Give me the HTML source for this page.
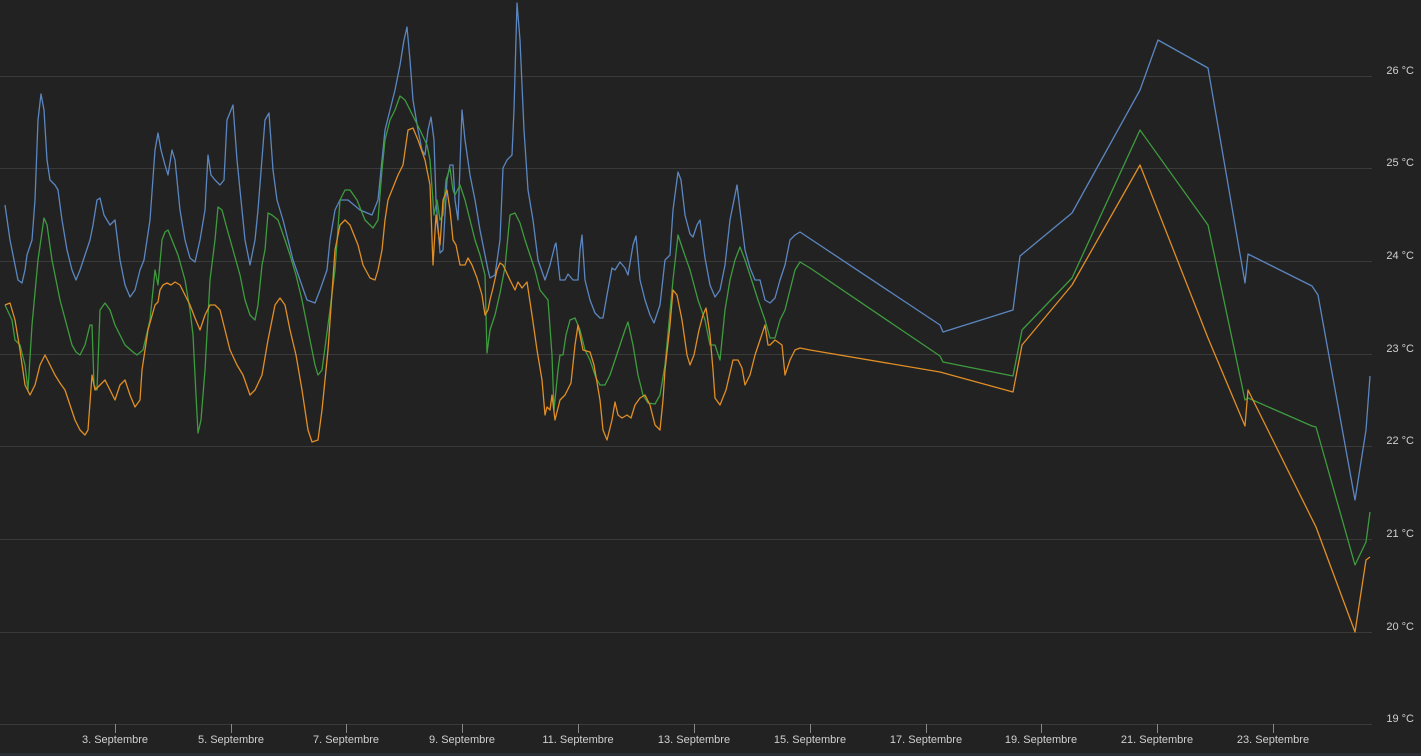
<!DOCTYPE html>
<html><head><meta charset="utf-8"><style>
html,body{margin:0;padding:0;background:#222;width:1421px;height:756px;overflow:hidden}
svg{display:block}
text{font-family:"Liberation Sans",sans-serif;font-size:11px;fill:#d0d0d0}
</style></head><body>
<svg width="1421" height="756" viewBox="0 0 1421 756">
<rect width="1421" height="756" fill="#222"/>
<g stroke="#3a3a3a" stroke-width="1">
<line x1="0" y1="76.5" x2="1372" y2="76.5"/>
<line x1="0" y1="168.5" x2="1372" y2="168.5"/>
<line x1="0" y1="261.5" x2="1372" y2="261.5"/>
<line x1="0" y1="354.5" x2="1372" y2="354.5"/>
<line x1="0" y1="446.5" x2="1372" y2="446.5"/>
<line x1="0" y1="539.5" x2="1372" y2="539.5"/>
<line x1="0" y1="632.5" x2="1372" y2="632.5"/>
<line x1="0" y1="724.5" x2="1372" y2="724.5"/>
</g>
<g stroke="#888" stroke-width="1">
<line x1="115.5" y1="724" x2="115.5" y2="733"/><line x1="231.5" y1="724" x2="231.5" y2="733"/>
<line x1="346.5" y1="724" x2="346.5" y2="733"/><line x1="462.5" y1="724" x2="462.5" y2="733"/>
<line x1="578.5" y1="724" x2="578.5" y2="733"/><line x1="694.5" y1="724" x2="694.5" y2="733"/>
<line x1="810.5" y1="724" x2="810.5" y2="733"/><line x1="926.5" y1="724" x2="926.5" y2="733"/>
<line x1="1041.5" y1="724" x2="1041.5" y2="733"/><line x1="1157.5" y1="724" x2="1157.5" y2="733"/>
<line x1="1273.5" y1="724" x2="1273.5" y2="733"/>
</g>
<g text-anchor="middle">
<text x="115" y="743">3. Septembre</text><text x="231" y="743">5. Septembre</text>
<text x="346" y="743">7. Septembre</text><text x="462" y="743">9. Septembre</text>
<text x="578" y="743">11. Septembre</text><text x="694" y="743">13. Septembre</text>
<text x="810" y="743">15. Septembre</text><text x="926" y="743">17. Septembre</text>
<text x="1041" y="743">19. Septembre</text><text x="1157" y="743">21. Septembre</text>
<text x="1273" y="743">23. Septembre</text>
</g>
<g text-anchor="end">
<text x="1414" y="74">26 °C</text><text x="1414" y="166">25 °C</text>
<text x="1414" y="259">24 °C</text><text x="1414" y="352">23 °C</text>
<text x="1414" y="444">22 °C</text><text x="1414" y="537">21 °C</text>
<text x="1414" y="630">20 °C</text><text x="1414" y="722">19 °C</text>
</g>
<rect x="0" y="753" width="1421" height="3" fill="#2a2d33"/>
<g fill="none" stroke-width="1.3" stroke-linejoin="round">
<polyline stroke="#5b86c0" points="5,205 10,240 18,280 22,283 25,270 27,255 32,240 35,200 38,120 41,94 44,110 47,160 50,180 55,185 58,190 62,220 67,250 72,270 76,280 80,270 85,255 90,240 93,225 97,200 100,198 104,215 110,225 115,220 120,260 125,285 130,297 135,290 140,270 144,260 150,220 155,150 158,133 161,150 165,165 168,175 172,150 175,160 180,210 185,240 190,258 195,262 200,240 205,210 208,155 211,175 215,180 220,185 224,180 227,120 233,105 237,160 242,210 245,240 250,265 255,240 258,210 265,120 269,113 273,170 277,200 283,220 288,240 293,260 300,280 307,300 315,303 320,290 327,270 330,240 335,210 340,200 348,200 360,210 372,215 378,200 385,130 390,110 395,90 400,65 404,40 407,27 410,60 413,100 418,130 422,150 425,155 428,130 431,117 434,140 436,200 440,253 443,250 447,180 450,165 453,165 455,200 458,220 462,110 465,140 470,175 475,200 480,230 484,250 488,270 490,278 495,275 500,240 503,168 507,160 512,155 514,110 517,3 520,40 524,130 528,190 533,220 538,260 545,280 550,265 555,245 556,243 560,280 565,280 568,274 573,280 578,280 580,250 582,235 585,280 590,300 595,313 600,318 603,318 607,295 612,268 615,270 620,262 625,268 628,275 633,245 636,236 640,280 645,300 650,315 654,323 660,305 665,260 670,255 673,210 678,172 681,180 685,215 690,234 693,237 697,225 700,220 705,258 710,285 715,297 720,290 725,265 730,220 737,185 740,210 745,250 750,268 755,280 760,280 765,300 770,303 775,298 780,280 785,265 790,240 795,235 800,232 940,325 943,332 1013,310 1020,256 1072,213 1140,90 1158,40 1208,68 1245,283 1248,254 1312,286 1318,295 1355,500 1366,430 1370,376"/>
<polyline stroke="#3e9b3e" points="5,305 12,320 15,340 20,345 25,365 28,390 32,325 38,260 44,218 47,225 52,260 60,300 68,330 72,345 76,352 80,355 85,345 90,325 92,325 94,385 97,390 100,310 105,303 110,310 115,325 125,345 133,352 137,355 143,350 150,320 155,270 158,285 162,240 165,232 168,230 172,240 178,255 185,280 190,310 193,335 196,395 198,433 201,420 205,370 210,280 215,240 218,207 222,210 226,225 233,250 240,275 245,300 250,315 255,320 258,305 262,265 265,250 268,213 272,215 278,220 285,240 290,255 296,275 302,300 308,330 315,365 318,375 322,370 330,310 335,270 340,200 345,190 350,190 357,200 365,220 373,228 378,220 382,170 385,140 390,120 395,110 400,96 405,100 410,110 415,120 420,130 427,145 430,160 434,215 437,200 440,220 443,215 446,180 450,168 453,190 455,195 460,185 465,200 470,220 475,240 480,255 485,275 487,353 490,330 495,315 500,293 505,267 510,215 515,213 520,223 525,240 535,270 540,290 548,300 552,355 554,410 556,390 558,370 560,355 563,355 566,335 570,320 575,318 580,330 585,350 590,360 596,378 600,385 605,385 610,375 615,360 620,345 625,330 628,322 633,345 638,375 643,395 648,403 655,404 660,395 665,365 673,280 678,235 683,250 690,270 698,300 705,320 710,345 715,345 720,360 725,310 730,280 735,260 740,247 745,260 750,275 758,300 765,320 770,338 775,338 780,320 785,310 790,290 795,270 800,262 810,268 940,356 943,362 1013,376 1022,330 1072,278 1140,130 1208,225 1245,400 1248,398 1312,426 1316,427 1355,565 1366,542 1370,512"/>
<polyline stroke="#e08e25" points="5,305 10,303 15,320 20,350 25,385 30,395 35,385 40,365 45,355 50,365 55,375 60,383 65,390 70,405 75,420 80,430 85,435 88,430 92,375 95,390 100,385 105,380 110,390 115,400 120,385 125,380 130,395 135,407 140,400 142,370 148,330 155,305 158,302 160,290 163,285 167,283 171,285 175,282 180,285 185,295 190,305 195,318 200,330 205,315 210,305 215,305 220,310 225,330 230,350 237,365 243,375 250,395 255,390 262,375 268,340 275,305 280,298 285,305 290,330 296,355 302,390 308,430 312,442 318,440 322,410 328,350 335,250 340,225 345,220 350,225 358,245 363,265 370,278 375,280 378,270 382,250 385,220 388,200 392,190 398,175 403,165 408,130 413,128 418,140 425,160 430,185 433,265 436,215 440,245 443,200 447,190 450,210 453,240 456,245 460,265 465,265 468,258 472,265 477,278 482,295 485,315 488,310 490,300 493,288 497,270 500,263 503,265 510,280 515,290 518,282 522,288 527,282 532,315 537,350 542,380 545,415 547,407 550,410 552,395 555,420 560,400 565,395 571,383 575,345 578,325 583,350 590,352 594,365 600,400 603,430 607,440 612,420 615,402 618,415 622,418 627,415 631,418 635,405 640,398 645,395 650,405 655,425 660,430 663,400 665,370 670,325 673,290 677,295 682,320 687,355 690,365 694,355 699,330 703,315 706,308 710,335 713,370 715,398 720,405 726,390 733,360 738,360 742,368 745,385 750,375 755,355 760,340 765,325 768,345 770,345 775,340 782,345 785,375 790,360 795,350 800,348 810,350 940,372 1013,392 1022,345 1072,285 1140,165 1208,338 1245,426 1248,390 1316,527 1355,632 1366,560 1370,557"/>
</g>
</svg>
</body></html>
